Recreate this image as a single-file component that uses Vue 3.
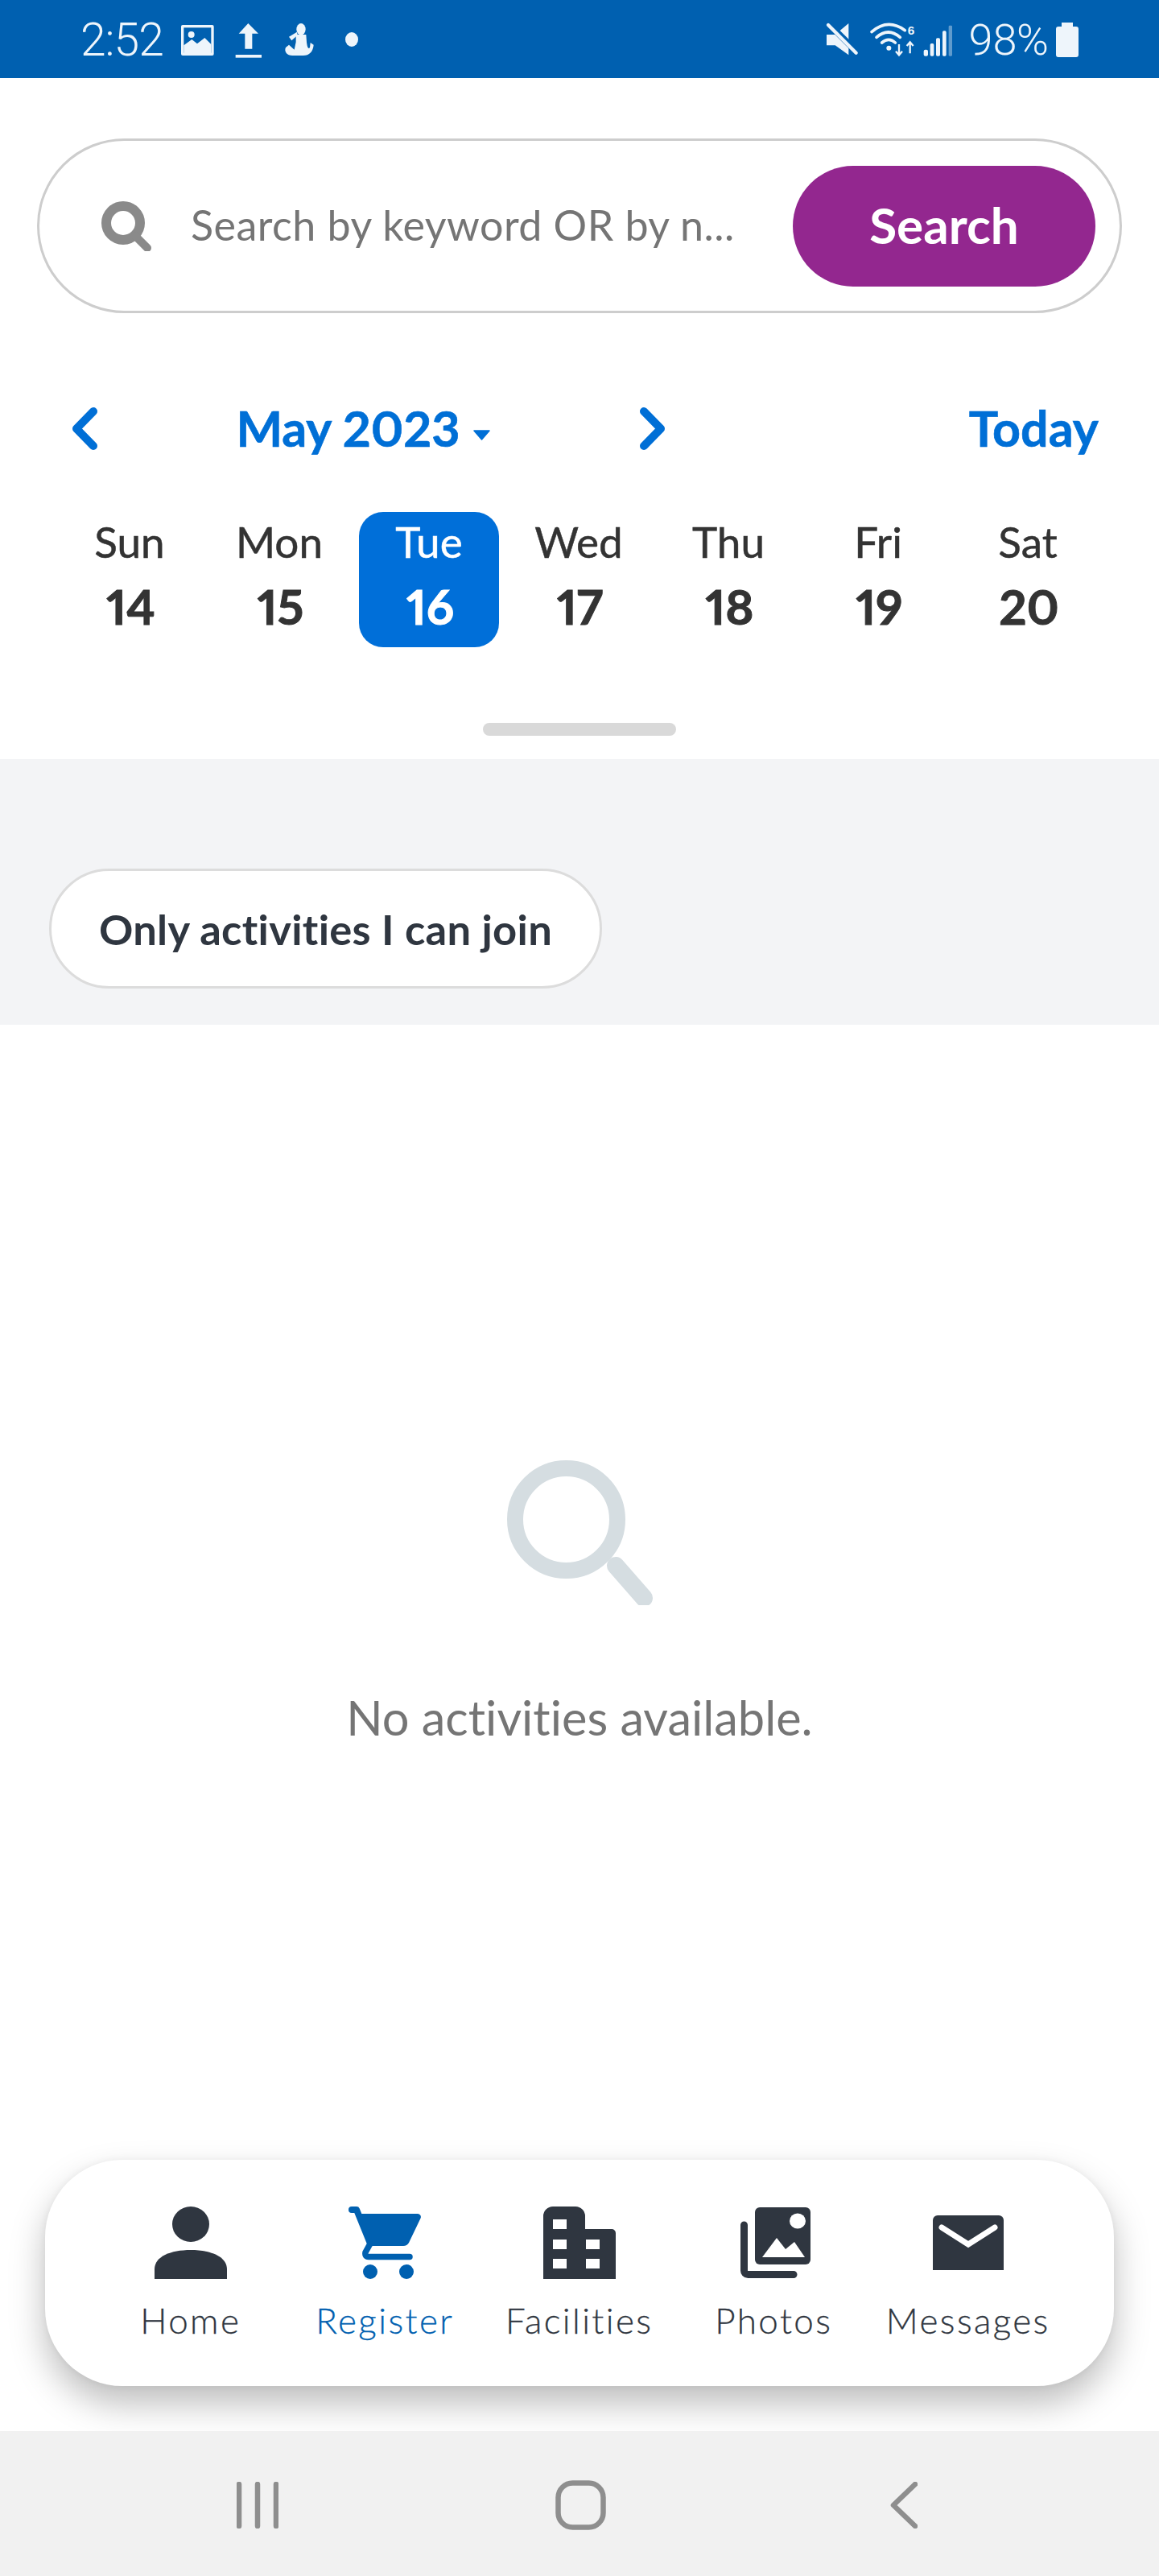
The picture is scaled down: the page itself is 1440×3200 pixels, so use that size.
<script setup>
const days = [
  { name: 'Sun', num: 14 },
  { name: 'Mon', num: 15 },
  { name: 'Tue', num: 16, active: true },
  { name: 'Wed', num: 17 },
  { name: 'Thu', num: 18 },
  { name: 'Fri', num: 19 },
  { name: 'Sat', num: 20 },
]
</script>

<template>
  <div class="page">
    <header class="status">
      <div class="status-left">
        <span class="time">2:52</span>
        <svg class="status-icons" width="190" height="60" viewBox="0 0 570 180" aria-hidden="true">
          <g fill="#eef5fb">
            <rect x="30" y="36" width="122" height="114" rx="6" />
            <rect x="40" y="46" width="102" height="94" fill="#0060b0" />
            <circle cx="68" cy="72" r="12" />
            <path d="M40 112 70 90 90 106 118 84 142 108V142H40Z" />
            <path d="M280 30 318 68H295V125H268V68H245Z" />
            <rect x="233" y="147" width="97" height="11" />
            <ellipse cx="477" cy="52" rx="17" ry="22" />
            <path d="M432 80 462 62 464 74 442 94Z" />
            <path d="M458 72H496L498 100C500 118 504 128 510 120L512 102 524 110C522 135 508 150 485 150H445C425 150 413 135 420 120L432 110 452 128 458 100Z" />
          </g>
        </svg>
        <span class="dot"></span>
      </div>
      <div class="status-right">
        <svg width="180" height="60" viewBox="0 0 540 180" aria-hidden="true">
          <path d="M30 72H62L112 30V148L62 112H30Z" fill="#eef5fb" />
          <path d="M24 18 152 146" stroke="#0060b0" stroke-width="24" />
          <path d="M36 36 140 140" stroke="#eef5fb" stroke-width="13" stroke-linecap="round" />
          <g fill="none" stroke="#eef5fb" stroke-width="11" stroke-linecap="round">
            <path d="M198 62Q258 10 322 56" />
            <path d="M216 82Q260 44 304 82" />
            <path d="M236 102Q262 80 286 102" />
          </g>
          <circle cx="262" cy="122" r="9" fill="#eef5fb" />
          <text x="332" y="72" class="six">6</text>
          <g fill="none" stroke="#eef5fb" stroke-width="7">
            <path d="M300 108V146M288 134 300 148 312 134" />
            <path d="M341 142V102M329 114 341 100 353 114" />
          </g>
          <g fill="#eef5fb">
            <rect x="392" y="128" width="16" height="24" rx="6" />
            <rect x="416" y="105" width="14" height="47" rx="5" />
            <rect x="438" y="85" width="15" height="67" rx="5" />
            <rect x="462" y="58" width="14" height="94" rx="5" />
            <rect x="485" y="38" width="13" height="114" rx="4" opacity=".4" />
          </g>
        </svg>
        <span class="pct">98%</span>
        <svg width="28" height="43" viewBox="0 0 28 43" aria-hidden="true">
          <path d="M7 0H21V5H25A3 3 0 0 1 28 8V40A3 3 0 0 1 25 43H3A3 3 0 0 1 0 40V8A3 3 0 0 1 3 5H7Z" fill="#eef5fb" />
        </svg>
      </div>
    </header>

    <section class="search">
      <svg class="search-icon" width="62" height="62" viewBox="0 0 62 62" aria-hidden="true">
        <circle cx="27" cy="27" r="21" fill="none" stroke="#8a8a8a" stroke-width="12" />
        <path d="M42 43 57 58" stroke="#8a8a8a" stroke-width="10" stroke-linecap="round" />
      </svg>
      <span class="placeholder">Search by keyword OR by n...</span>
      <button class="search-btn">Search</button>
    </section>

    <section class="cal-head">
      <div class="cal-nav">
        <svg width="33" height="53" viewBox="0 0 33 53" aria-hidden="true">
          <path d="M27 5 6 26.5 27 48" class="chev" />
        </svg>
        <span class="month">May 2023<svg class="caret" width="21" height="13" viewBox="0 0 21 13" aria-hidden="true"><path d="M1 1H20L10.500 12Z" fill="#006fd6" stroke="#006fd6" stroke-width="1.500" stroke-linejoin="round" /></svg></span>
        <svg width="33" height="53" viewBox="0 0 33 53" aria-hidden="true">
          <path d="M6 5 27 26.500 6 48" class="chev" />
        </svg>
      </div>
      <span class="today">Today</span>
    </section>

    <section class="days">
      <div v-for="d in days" :key="d.num" class="day" :class="{ active: d.active }">
        <span class="day-name">{{ d.name }}</span>
        <span class="day-num">{{ d.num }}</span>
      </div>
    </section>

    <div class="grabber"></div>

    <section class="band">
      <button class="chip">Only activities I can join</button>
    </section>

    <main class="empty">
      <svg width="184" height="180" viewBox="0 0 184 180" aria-hidden="true">
        <circle cx="75.500" cy="73.500" r="63.500" fill="none" stroke="#d5dde1" stroke-width="20" />
        <path d="M137 131 172 171" stroke="#d5dde1" stroke-width="22" stroke-linecap="round" />
      </svg>
      <p class="empty-text">No activities available.</p>
    </main>

    <nav class="tabs">
      <div class="tab">
        <div class="tab-icon">
          <svg width="90" height="90" viewBox="0 0 90 90" aria-hidden="true">
            <ellipse cx="45" cy="22" rx="23" ry="22" fill="#2f3640" />
            <path d="M0 90V78C0 62 20 54 45 54S90 62 90 78V90Z" fill="#2f3640" />
          </svg>
        </div>
        <span class="tab-label">Home</span>
      </div>
      <div class="tab current">
        <div class="tab-icon">
          <svg width="90" height="90" viewBox="0 0 90 90" aria-hidden="true">
            <path d="M15 9H86A4 4 0 0 1 89.600 14.500L75 45A8 8 0 0 1 68 49H30Z" fill="#0060b0" />
            <path d="M4 4H10L27 46" fill="none" stroke="#0060b0" stroke-width="8" stroke-linecap="round" stroke-linejoin="round" />
            <path d="M27 46 21 57Q20 62.500 25 62.500H76" fill="none" stroke="#0060b0" stroke-width="7.500" stroke-linecap="round" />
            <circle cx="27" cy="81" r="9" fill="#0060b0" />
            <circle cx="72" cy="81" r="9" fill="#0060b0" />
          </svg>
        </div>
        <span class="tab-label">Register</span>
      </div>
      <div class="tab">
        <div class="tab-icon">
          <svg width="90" height="90" viewBox="0 0 90 90" aria-hidden="true">
            <path d="M0 90V12A12 12 0 0 1 12 0H40A12 12 0 0 1 52 12V28H85A5 5 0 0 1 90 33V90Z" fill="#2f3640" />
            <g fill="#fff">
              <rect x="12" y="16" width="17" height="12" />
              <rect x="12" y="41" width="17" height="12" />
              <rect x="12" y="65" width="17" height="12" />
              <rect x="53" y="41" width="17" height="12" />
              <rect x="53" y="65" width="17" height="12" />
            </g>
          </svg>
        </div>
        <span class="tab-label">Facilities</span>
      </div>
      <div class="tab">
        <div class="tab-icon">
          <svg width="92" height="88" viewBox="-5 0 92 88" aria-hidden="true">
            <rect x="18" y="0" width="69" height="71" rx="6" fill="#2f3640" />
            <ellipse cx="71" cy="17" rx="10" ry="9.500" fill="#fff" />
            <path d="M27 62 45 38 56 52 67 43 80 62Z" fill="#fff" />
            <path d="M4.500 22V78A5 5 0 0 0 9.500 83.500H66" fill="none" stroke="#2f3640" stroke-width="9" stroke-linecap="round" />
          </svg>
        </div>
        <span class="tab-label">Photos</span>
      </div>
      <div class="tab">
        <div class="tab-icon">
          <svg width="88" height="68" viewBox="0 0 88 68" aria-hidden="true">
            <path d="M6 0H82A6 6 0 0 1 88 6V68H0V6A6 6 0 0 1 6 0Z" fill="#2f3640" />
            <path d="M11 15 44 36 77 15" fill="none" stroke="#fff" stroke-width="7" stroke-linecap="round" />
          </svg>
        </div>
        <span class="tab-label">Messages</span>
      </div>
    </nav>

    <footer class="sysbar">
      <svg class="sys-recents" width="52" height="58" viewBox="0 0 52 58" aria-hidden="true">
        <path d="M3 3V55M26 3V55M49 3V55" class="sys-stroke" />
      </svg>
      <svg class="sys-home" width="63" height="62" viewBox="0 0 63 62" aria-hidden="true">
        <rect x="3.500" y="3.500" width="56" height="55" rx="18" class="sys-stroke" />
      </svg>
      <svg class="sys-back" width="34" height="58" viewBox="0 0 34 58" aria-hidden="true">
        <path d="M31 3 4 29 31 55" class="sys-stroke" />
      </svg>
    </footer>
  </div>
</template>

<style scoped>
.page {
  width: 1440px;
  height: 3200px;
  display: flex;
  flex-direction: column;
  overflow: hidden;
  background: #fff;
  font-family: Lato, "Liberation Sans", sans-serif;
  font-variant-ligatures: none;
  font-variant-numeric: proportional-nums;
}

.status {
  height: 97px;
  flex: none;
  display: flex;
  justify-content: space-between;
  align-items: center;
  padding: 0 100px;
  background: #0060b0;
  color: #eef5fb;
  font-family: Roboto, sans-serif;
  font-weight: 300;
  font-size: 54px;
  box-sizing: border-box;
}
.status-left,
.status-right {
  display: flex;
  align-items: center;
  height: 60px;
  margin-top: 1px;
}
.time {
  width: 115px;
  font-size: 57px;
  letter-spacing: -1px;
}
.dot {
  width: 16px;
  height: 18px;
  margin-left: 24px;
  border-radius: 50%;
  background: #eef5fb;
}
.six {
  font-family: "Liberation Sans", sans-serif;
  font-weight: 700;
  font-size: 46px;
  fill: #eef5fb;
}
.pct {
  margin: 0 10px 0 7px;
  letter-spacing: -1px;
}

.search {
  flex: none;
  height: 217px;
  margin: 75px 46px 0;
  padding: 0 30px 0 77px;
  display: flex;
  align-items: center;
  box-sizing: border-box;
  border: 3px solid #cdcdcd;
  border-radius: 109px;
}
.search-icon {
  flex: none;
}
.placeholder {
  flex: 1;
  margin: 0 0 3px 49px;
  font-size: 52px;
  letter-spacing: 0.45px;
  color: #757575;
  white-space: nowrap;
}
.search-btn {
  width: 376px;
  height: 150px;
  padding: 0 0 4px;
  border: 0;
  border-radius: 75px;
  background: #93278f;
  color: #fff;
  font: 700 62px Lato, sans-serif;
  font-variant-ligatures: none;
}

.cal-head {
  flex: none;
  height: 53px;
  margin-top: 117px;
  padding: 0 75px 0 89px;
  display: flex;
  align-items: center;
  justify-content: space-between;
}
.cal-nav {
  width: 738px;
  display: flex;
  align-items: center;
  justify-content: space-between;
}
.chev {
  fill: none;
  stroke: #006fd6;
  stroke-width: 10;
  stroke-linecap: round;
  stroke-linejoin: round;
}
.month {
  display: flex;
  align-items: center;
  margin: 0 14px 3px 0;
  color: #006fd6;
  font-size: 61px;
  font-weight: 700;
  -webkit-text-stroke: 0.6px #006fd6;
}
.caret {
  margin: 18px 0 0 16px;
}
.today {
  margin-bottom: 3px;
  color: #006fd6;
  font-size: 61px;
  font-weight: 700;
  -webkit-text-stroke: 0.6px #006fd6;
}

.days {
  flex: none;
  margin-top: 77px;
  padding-left: 68px;
  display: grid;
  grid-template-columns: repeat(7, 186px);
  justify-items: center;
}
.day {
  width: 174px;
  height: 168px;
  padding-top: 4px;
  box-sizing: border-box;
  border-radius: 30px;
  display: flex;
  flex-direction: column;
  align-items: center;
  color: #333;
}
.day.active {
  background: #006fd9;
  color: #fff;
}
.day-name {
  font-size: 53px;
  line-height: 66px;
  -webkit-text-stroke: 0.5px currentColor;
}
.day-num {
  margin: 14px 0 0 3px;
  font-size: 60px;
  line-height: 66px;
  font-weight: 700;
  -webkit-text-stroke: 1px currentColor;
}

.grabber {
  flex: none;
  width: 240px;
  height: 16px;
  margin: 94px auto 29px;
  border-radius: 8px;
  background: #d9d9d9;
}

.band {
  flex: none;
  height: 330px;
  box-sizing: border-box;
  padding: 136px 0 0 61px;
  background: #f3f4f6;
}
.chip {
  display: block;
  width: 687px;
  height: 149px;
  padding-bottom: 2px;
  box-sizing: border-box;
  border: 3px solid #dcdcdc;
  border-radius: 75px;
  background: #fff;
  color: #2f3640;
  font: 700 52.500px Lato, sans-serif;
  font-variant-ligatures: none;
  letter-spacing: 0.3px;
}

.empty {
  flex: 1;
  min-height: 0;
  padding-top: 541px;
  display: flex;
  flex-direction: column;
  align-items: center;
}
.empty-text {
  margin: 104px 0 0;
  color: #757575;
  font-size: 59.500px;
  line-height: 70px;
}

.tabs {
  flex: none;
  height: 281px;
  margin: 0 56px 56px;
  padding: 58px 0 0 60px;
  box-sizing: border-box;
  display: grid;
  grid-template-columns: repeat(5, 241.5px);
  border-radius: 96px;
  background: #fff;
  box-shadow: 0 22px 44px rgba(0, 0, 0, 0.26), 0 0 10px rgba(0, 0, 0, 0.05);
}
.tab {
  display: flex;
  flex-direction: column;
  align-items: center;
  color: #2f3640;
}
.tab.current {
  color: #0060b0;
}
.tab-icon {
  height: 90px;
  display: flex;
  align-items: center;
  justify-content: center;
}
.tab-label {
  margin-top: 23px;
  font-size: 44px;
  line-height: 56px;
  font-weight: 300;
  letter-spacing: 2.400px;
  -webkit-text-stroke: 0.3px currentColor;
}

.sysbar {
  flex: none;
  height: 180px;
  padding: 3px 0 0 294px;
  box-sizing: border-box;
  display: flex;
  align-items: center;
  background: #f1f1f1;
}
.sys-stroke {
  fill: none;
  stroke: #8e8e8e;
  stroke-width: 6.500;
  stroke-linecap: round;
  stroke-linejoin: round;
}
.sys-home {
  margin-left: 344px;
}
.sys-back {
  margin-left: 353px;
}
</style>

<style>
html,
body {
  margin: 0;
  background: #fff;
}
</style>
